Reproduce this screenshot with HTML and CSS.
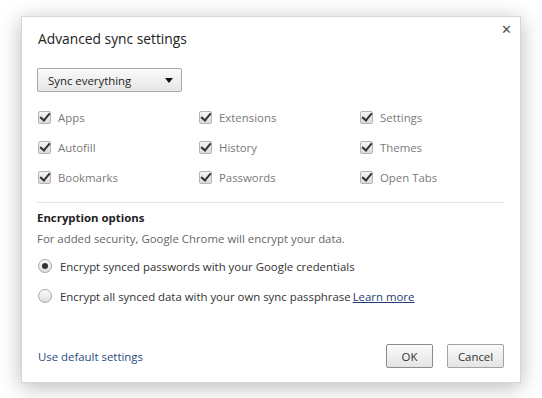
FILE: index.html
```html
<!DOCTYPE html>
<html lang="en">
<head>
    <meta charset="UTF-8">
    <title>Advanced sync settings</title>
    <link rel="stylesheet" href="styles.css">
</head>
<body>
    <div class="overlay">
        <div class="dialog">
            <div class="close">&#x2715;</div>
            <h1 class="title">Advanced sync settings</h1>

            <div class="select">
                <span>Sync everything</span>
                <span class="arrow"></span>
            </div>

            <div class="types">
                <div class="type"><span class="check"></span>Apps</div>
                <div class="type"><span class="check"></span>Extensions</div>
                <div class="type"><span class="check"></span>Settings</div>
                <div class="type"><span class="check"></span>Autofill</div>
                <div class="type"><span class="check"></span>History</div>
                <div class="type"><span class="check"></span>Themes</div>
                <div class="type"><span class="check"></span>Bookmarks</div>
                <div class="type"><span class="check"></span>Passwords</div>
                <div class="type"><span class="check"></span>Open Tabs</div>
            </div>

            <div class="section">
                <h2>Encryption options</h2>
                <p class="desc">For added security, Google Chrome will encrypt your data.</p>
                <div class="radio-row"><span class="radio on"></span>Encrypt synced passwords with your Google credentials</div>
                <div class="radio-row"><span class="radio"></span>Encrypt all synced data with your own sync passphrase <a class="link" href="#">Learn more</a></div>
            </div>

            <div class="footer">
                <a class="default-link" href="#">Use default settings</a>
                <div class="buttons">
                    <button class="btn ok">OK</button>
                    <button class="btn">Cancel</button>
                </div>
            </div>
        </div>
    </div>
</body>
</html>
```

FILE: styles.css
```css
body {
    margin: 0;
    background: #fff;
    font-family: 'Open Sans', sans-serif;
    font-size: 11.4px;
    color: #333;
}
.overlay {
    padding: 16px 21px 15px 21px;
}
.dialog {
    position: relative;
    width: 500px;
    height: 367px;
    box-sizing: border-box;
    background: #fff;
    border: 1px solid #d6d6d6;
    box-shadow: 0 4px 20px rgba(0, 0, 0, 0.28);
    padding: 0 15px 0 15px;
    display: flex;
    flex-direction: column;
}
.close {
    position: absolute;
    top: 5px;
    right: 8px;
    font-size: 13px;
    font-weight: bold;
    color: #555;
    font-family: 'DejaVu Sans', sans-serif;
}
.title {
    margin: 12px 0 0 1px;
    font-size: 13.8px;
    font-weight: normal;
    color: #222;
    line-height: 20px;
}
.select {
    margin-top: 19px;
    width: 145px;
    height: 24px;
    box-sizing: border-box;
    border: 1px solid #a9a9a9;
    border-radius: 2px;
    background: linear-gradient(#fafafa, #e6e6e6);
    display: flex;
    align-items: center;
    justify-content: space-between;
    padding: 0 8px 0 10px;
    color: #222;
}
.arrow {
    width: 0;
    height: 0;
    border-left: 4.5px solid transparent;
    border-right: 4.5px solid transparent;
    border-top: 5px solid #111;
}
.types {
    margin-top: 14px;
    display: grid;
    grid-template-columns: 161px 161px 1fr;
    row-gap: 8px;
    color: #7a7a7a;
}
.type {
    display: flex;
    align-items: center;
    height: 22px;
}
.check {
    position: relative;
    width: 11px;
    height: 11px;
    border: 1px solid #b4b4b4;
    border-radius: 2px;
    background: linear-gradient(#f4f4f4, #dcdcdc);
    margin: 0 7px 0 1px;
}
.check::after {
    content: "";
    position: absolute;
    left: 3px;
    top: -1px;
    width: 4px;
    height: 8px;
    border-right: 2.5px solid #333;
    border-bottom: 2.5px solid #333;
    transform: rotate(40deg);
}
.section {
    margin-top: 14px;
    border-top: 1px solid #e4e4e4;
    padding-top: 6px;
}
.section h2 {
    margin: 0;
    font-size: 11.4px;
    font-weight: bold;
    color: #222;
    line-height: 18px;
}
.desc {
    margin: 3px 0 0 0;
    color: #666;
    line-height: 18px;
}
.radio-row {
    display: flex;
    align-items: center;
    height: 22px;
    margin-top: 7px;
    color: #333;
}
.radio-row + .radio-row {
    margin-top: 8px;
}
.radio {
    position: relative;
    width: 12px;
    height: 12px;
    border: 1px solid #a8a8a8;
    border-radius: 50%;
    background: linear-gradient(#fdfdfd, #dcdcdc);
    margin: 0 8px 0 1px;
}
.radio.on::after {
    content: "";
    position: absolute;
    left: 3px;
    top: 3px;
    width: 6px;
    height: 6px;
    border-radius: 50%;
    background: #333;
}
.link {
    color: #1f3b73;
    margin-left: 2px;
}
.footer {
    margin-top: auto;
    margin-bottom: 14px;
    display: flex;
    align-items: center;
    justify-content: space-between;
}
.default-link {
    color: #2a4a80;
    text-decoration: none;
    margin-left: 1px;
}
.buttons {
    display: flex;
    gap: 14px;
    margin-right: 1px;
}
.btn {
    height: 24px;
    box-sizing: border-box;
    border: 1px solid #a3a3a3;
    border-radius: 2px;
    background: linear-gradient(#fafafa, #e4e4e4);
    font-family: 'Open Sans', sans-serif;
    font-size: 11.4px;
    color: #333;
    padding: 0;
}
.ok {
    width: 47px;
    border-color: #8c8c8c;
}
.btn:not(.ok) {
    width: 57px;
}
```
